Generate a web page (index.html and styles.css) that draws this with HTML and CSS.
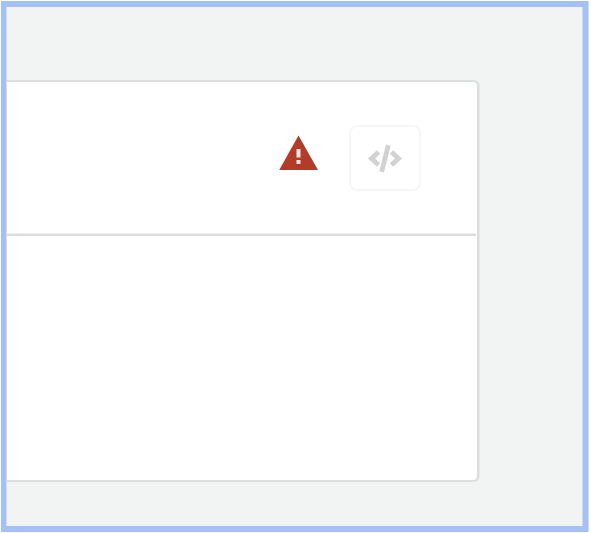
FILE: index.html
```html
<!DOCTYPE html>
<html lang="en">
<head>
<meta charset="utf-8">
<title>Panel</title>
<link rel="stylesheet" href="styles.css">
</head>
<body>
<main class="frame">
  <section class="card">
    <header class="card-header">
      <svg class="warning" viewBox="0 0 40 36" role="img" aria-label="Warning">
        <path fill="#b23c2a" d="M19.500 .5 39 35H.2Z"/>
        <path fill="#f6e6e2" d="M17.500 14h4v8.500h-4zM17.500 25h4v4h-4z"/>
      </svg>
      <button class="code-button" type="button" aria-label="View code">
        <svg class="code-icon" viewBox="0 0 36 30" fill="none" stroke="#d2d2d2" stroke-width="4.8">
          <path d="M11.500 9 4.500 15.500l7 6.500M24.500 9l7 6.500-7 6.500"/>
          <path d="M21.300 2.100 14.700 28.900"/>
        </svg>
      </button>
    </header>
    <div class="card-body"></div>
  </section>
</main>
</body>
</html>
```
FILE: styles.css
```css
* {
  box-sizing: border-box;
}

body {
  margin: 0;
  background: #fff;
}

.frame {
  width: 587px;
  height: 531px;
  margin: 1px 0 0 1px;
  padding-top: 73px;
  border: 6px solid #a4c0f4;
  border-left-width: 5px;
  border-right-width: 5px;
  box-shadow: inset 1px 0 #cddbf6, inset -1px 0 #cddbf6, 1px 0 #cddbf6;
  background: #f2f4f3;
}

.card {
  display: flex;
  flex-direction: column;
  width: 472px;
  height: 402px;
  margin-left: 1px;
  border: solid #dcdede;
  border-width: 2px 2px 2px 0;
  border-radius: 0 6px 6px 0;
  box-shadow: 1px 0 #e8eaea;
  background: #fff;
}

.card-header {
  display: flex;
  align-items: flex-start;
  justify-content: flex-end;
  gap: 30px;
  height: 154px;
  margin-right: 1px;
  padding: 43px 55px 0 0;
  border-bottom: 2px solid #dcdcdc;
  box-shadow: 0 -1px #f1f1f1 inset;
}

.warning {
  width: 40px;
  height: 36px;
  margin-top: 10px;
}

.code-button {
  display: grid;
  place-items: center;
  width: 72px;
  height: 66px;
  padding: 0;
  border: 2px solid #f6f6f6;
  border-radius: 8px;
  background: #fff;
}

.code-icon {
  width: 36px;
  height: 30px;
}

.card-body {
  flex: 1;
}
```
